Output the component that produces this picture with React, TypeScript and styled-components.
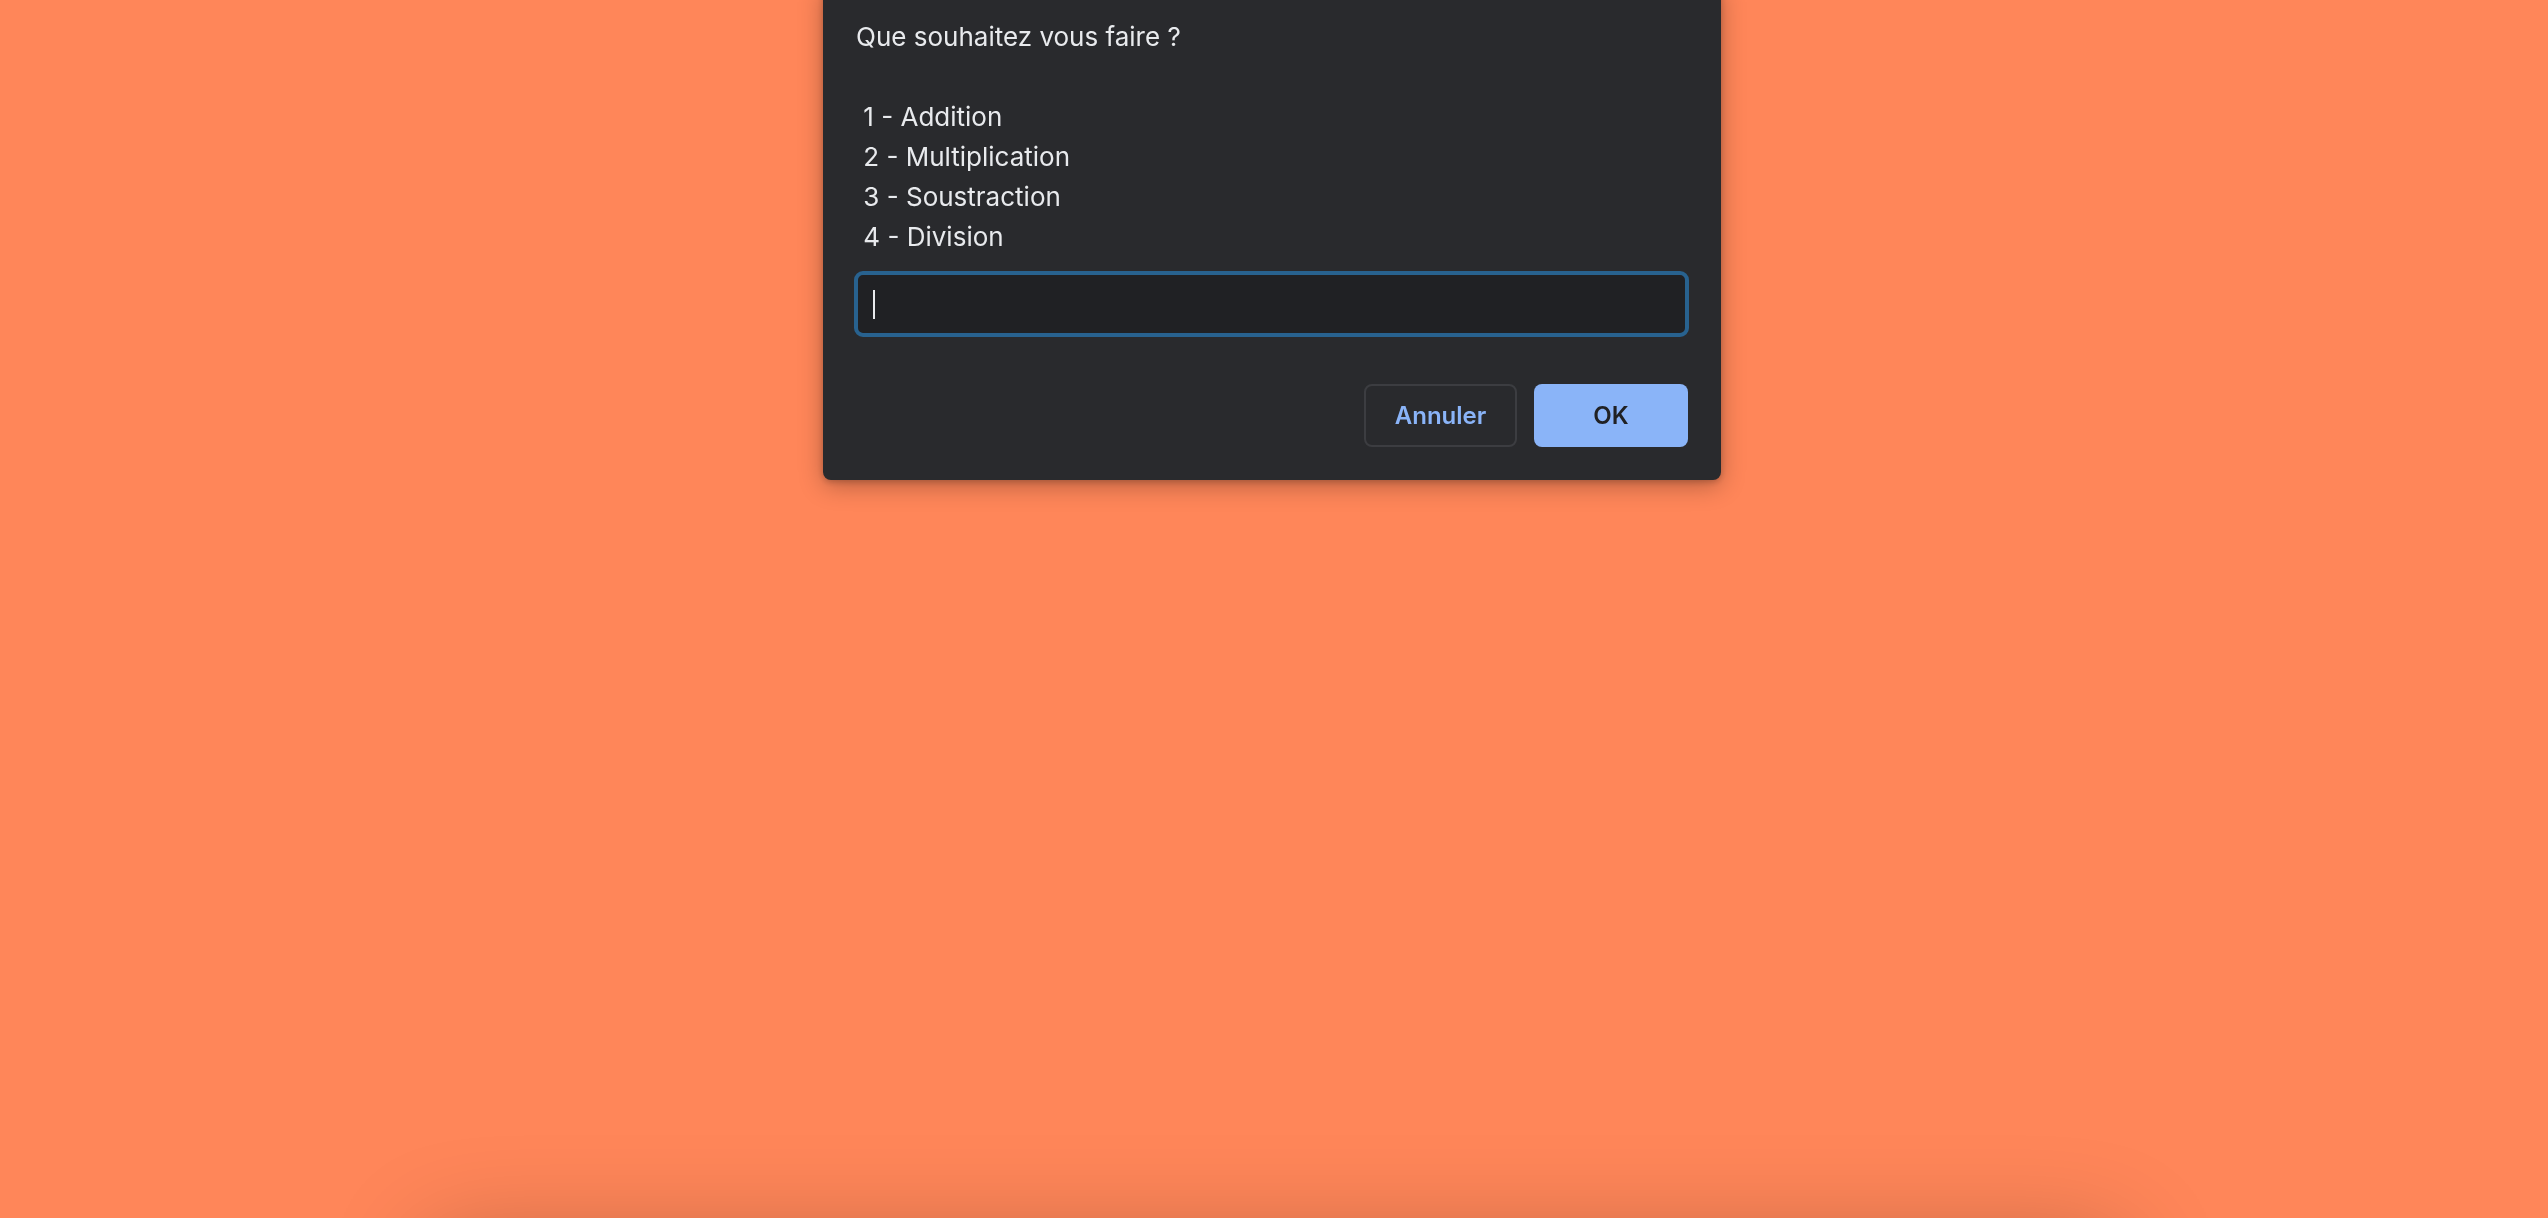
import React from "react";
import styled, { createGlobalStyle } from "styled-components";

const GlobalStyle = createGlobalStyle`
  html, body {
    margin: 0;
    padding: 0;
    height: 100%;
    overflow: hidden;
    background: #ff8659;
  }
  body {
    font-family: Inter, "Noto Sans", "Liberation Sans", sans-serif;
  }
`;

const Page = styled.div`
  width: 100%;
  height: 100vh;
  display: flex;
  flex-direction: column;
  align-items: center;
  background: #ff8659;
  overflow: hidden;
`;

const Card = styled.div`
  flex-shrink: 0;
  margin-top: 1240px;
  margin-left: 2px;
  width: 1690px;
  height: 400px;
  background: #ff8659;
  border-radius: 12px;
  box-shadow: 0 0 100px rgba(0, 0, 0, 0.25);
`;

const Overlay = styled.div`
  position: fixed;
  top: 0;
  left: 0;
  right: 0;
  display: flex;
  justify-content: center;
`;

const Dialog = styled.div`
  box-sizing: border-box;
  margin-top: -15px;
  margin-left: -4px;
  width: 898px;
  padding: 32px 32px 33px 31px;
  background: #292a2d;
  border-radius: 0 0 8px 8px;
  box-shadow: 0 6px 24px rgba(0, 0, 0, 0.28), 0 2px 6px rgba(0, 0, 0, 0.2);
  display: flex;
  flex-direction: column;
`;

const Message = styled.div`
  color: #e8eaed;
  font-size: 26px;
  line-height: 40px;
  white-space: pre-wrap;
  padding-left: 2px;
`;

const Field = styled.div`
  margin-top: 14px;
  box-sizing: border-box;
  height: 66px;
  border: 4px solid #28628f;
  border-radius: 9px;
  background: #202124;
  display: flex;
  align-items: center;
  padding-left: 15px;
`;

const Caret = styled.span`
  display: block;
  width: 2px;
  height: 29px;
  background: #e8eaed;
`;

const Actions = styled.div`
  margin-top: 47px;
  display: flex;
  justify-content: flex-end;
  gap: 17px;
  padding-right: 1px;
`;

const Button = styled.button<{ $primary?: boolean }>`
  box-sizing: border-box;
  height: 63px;
  width: ${(p) => (p.$primary ? "154px" : "153px")};
  border-radius: 8px;
  font-family: Inter, "Noto Sans", "Liberation Sans", sans-serif;
  font-size: 24px;
  font-weight: 600;
  cursor: pointer;
  border: ${(p) => (p.$primary ? "none" : "2px solid #3c3d41")};
  background: ${(p) => (p.$primary ? "#8ab4f8" : "#292a2d")};
  color: ${(p) => (p.$primary ? "#202124" : "#8ab4f8")};
`;

const message =
  "Que souhaitez vous faire ?\n\n 1 - Addition\n 2 - Multiplication\n 3 - Soustraction\n 4 - Division";

export default function App() {
  return (
    <>
      <GlobalStyle />
      <Page>
        <Card />
      </Page>
      <Overlay>
        <Dialog>
          <Message>{message}</Message>
          <Field>
            <Caret />
          </Field>
          <Actions>
            <Button>Annuler</Button>
            <Button $primary>OK</Button>
          </Actions>
        </Dialog>
      </Overlay>
    </>
  );
}
